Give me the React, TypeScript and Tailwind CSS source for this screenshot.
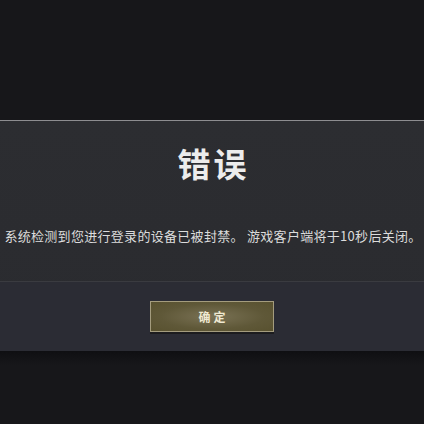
const font = "font-['Noto_Sans_CJK_SC','Noto_Sans',sans-serif]";

const App = () => {
  return (
    <div className={`flex h-[424px] w-[424px] flex-col bg-[#17171a] ${font}`}>
      <div className="h-[120px] bg-[#17171a]" />
      <div className="flex h-[231px] flex-col border-t border-[#8d8d90] bg-[linear-gradient(180deg,#2c2d31_0%,#2a2b2f_100%)]">
        <div className="flex h-[160px] flex-col items-center">
          <h1 className="mt-[19px] pl-[3px] text-[33px] font-bold leading-[46px] tracking-[3px] text-[#ececec]">
            错误
          </h1>
          <p className="mt-[41px] whitespace-nowrap pl-[2px] text-[13px] leading-[18px] tracking-[0.3px] text-[#dcdcdc]">
            系统检测到您进行登录的设备已被封禁。 游戏客户端将于10秒后关闭。
          </p>
        </div>
        <div className="flex flex-1 items-start justify-center border-t border-[#3a3b40] bg-[#2b2c34] pt-[19px]">
          <button className="flex h-[31px] w-[124px] items-center justify-center border border-[#a49c7e] bg-[radial-gradient(ellipse_at_center,#7a7255_0%,#5f5838_60%,#58512f_100%)] pl-[3px] text-[12px] font-bold tracking-[3px] text-[#efe9d2] shadow-[0_2px_0_#1c1c1e]">
            确定
          </button>
        </div>
      </div>
      <div className="flex-1 bg-[linear-gradient(180deg,#0f0f12_0%,#17171a_20%)]" />
    </div>
  );
};

export default App;
